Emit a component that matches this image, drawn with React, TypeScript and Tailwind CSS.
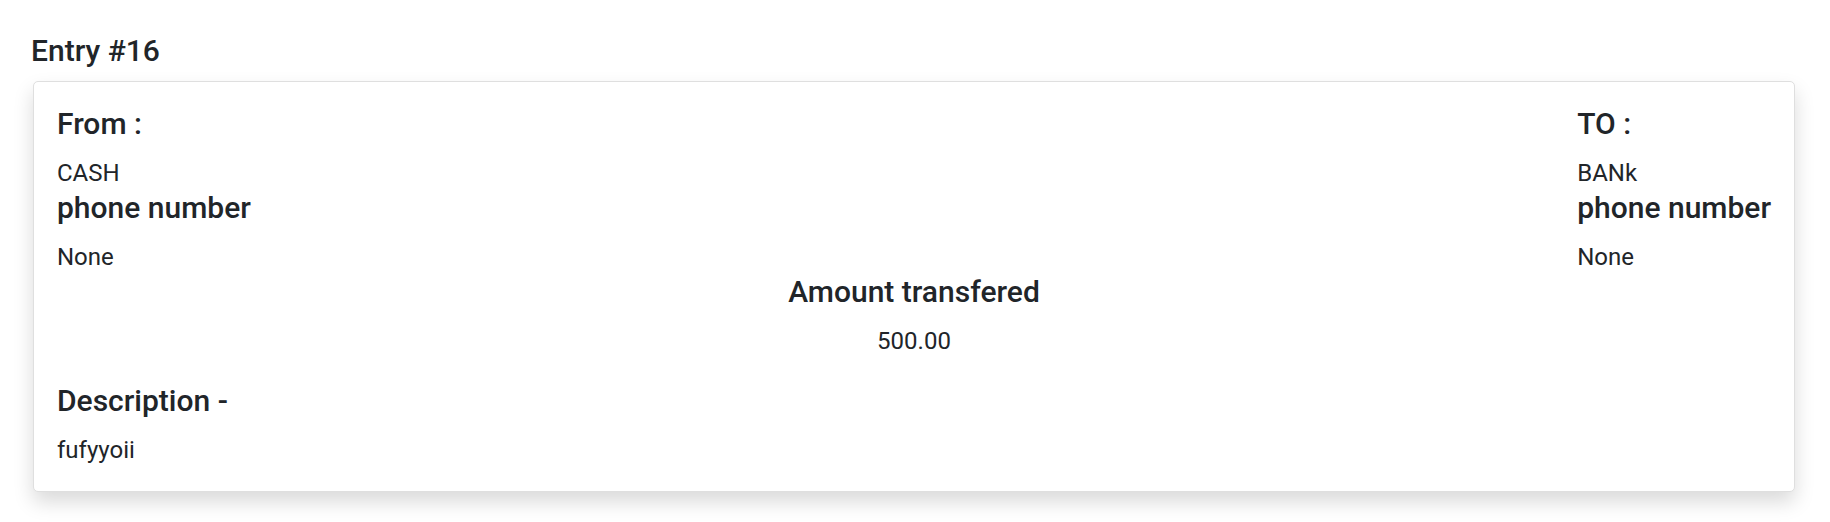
const heading = 'text-[30px] leading-[36px] font-medium text-[#212529]'
const body = 'text-[24px] leading-[33px] text-[#212529]'

interface PartyProps {
  label: string
  name: string
  phone: string
}

function Party({ label, name, phone }: PartyProps) {
  return (
    <div className="flex flex-col">
      <h4 className={`${heading} mb-[15px]`}>{label}</h4>
      <p className={body}>{name}</p>
      <h4 className={`${heading} mb-[15px]`}>phone number</h4>
      <p className={body}>{phone}</p>
    </div>
  )
}

export default function App() {
  return (
    <div
      className="min-h-screen bg-white pt-[33px] pl-[33px] pr-[35px]"
      style={{ fontFamily: 'Roboto, "Noto Sans", sans-serif' }}
    >
      <h4 className={`${heading} -ml-[2px] mb-[12px]`}>Entry #16</h4>

      <div className="rounded-[5px] border border-[#dfdfdf] bg-white px-[23px] pt-[24px] pb-[24px] shadow-[0_10px_20px_rgba(0,0,0,0.15)]">
        <div className="flex justify-between items-start">
          <Party label="From :" name="CASH" phone="None" />
          <Party label="TO :" name="BANk" phone="None" />
        </div>

        <div className="flex flex-col items-center">
          <h4 className={`${heading} mb-[15px]`}>Amount transfered</h4>
          <p className={body}>500.00</p>
        </div>

        <div className="mt-[25px]">
          <h4 className={`${heading} mb-[15px]`}>Description -</h4>
          <p className={body}>fufyyoii</p>
        </div>
      </div>
    </div>
  )
}
